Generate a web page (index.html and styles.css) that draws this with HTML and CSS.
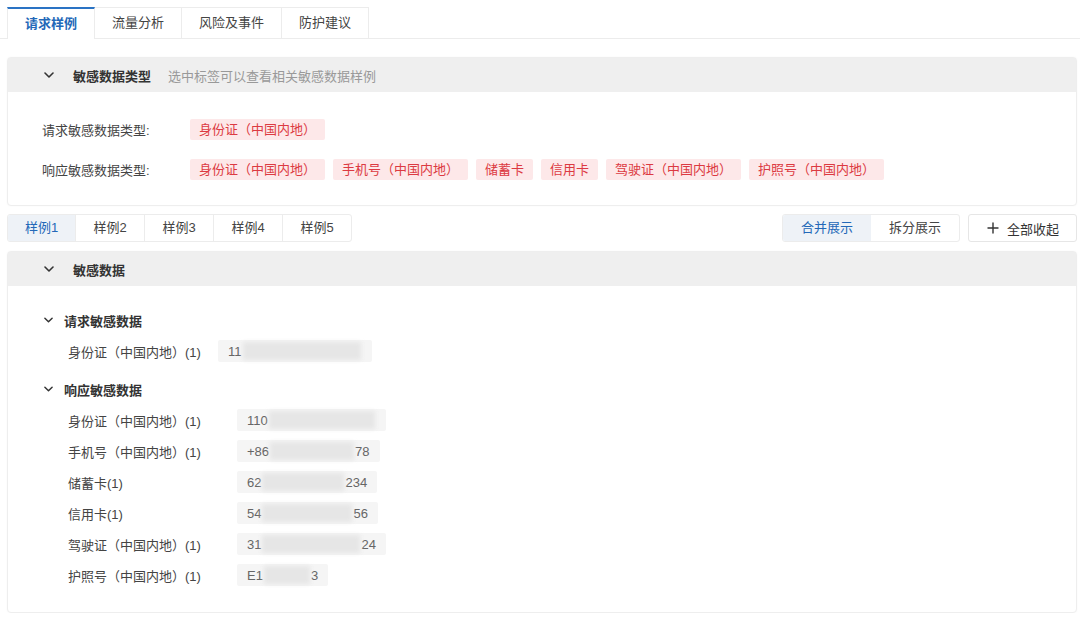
FILE: index.html
```html
<!DOCTYPE html>
<html lang="zh-CN">
<head>
    <meta charset="UTF-8">
    <title>请求样例</title>
    <link rel="stylesheet" href="styles.css">
</head>
<body>

    <div class="tabs">
        <div class="tab active">请求样例</div>
        <div class="tab">流量分析</div>
        <div class="tab">风险及事件</div>
        <div class="tab">防护建议</div>
    </div>

    <div class="panel types-panel">
        <div class="panel-head">
            <svg class="chev" width="10" height="6" viewBox="0 0 10 6"><polyline points="1,1 5,5 9,1"/></svg>
            <span class="panel-title">敏感数据类型</span>
            <span class="panel-hint">选中标签可以查看相关敏感数据样例</span>
        </div>
        <div class="types-body">
            <div class="type-row">
                <span class="type-label">请求敏感数据类型:</span>
                <span class="tag">身份证（中国内地）</span>
            </div>
            <div class="type-row">
                <span class="type-label">响应敏感数据类型:</span>
                <span class="tag">身份证（中国内地）</span>
                <span class="tag">手机号（中国内地）</span>
                <span class="tag">储蓄卡</span>
                <span class="tag">信用卡</span>
                <span class="tag">驾驶证（中国内地）</span>
                <span class="tag">护照号（中国内地）</span>
            </div>
        </div>
    </div>

    <div class="toolbar">
        <div class="samples">
            <div class="sample active">样例1</div>
            <div class="sample">样例2</div>
            <div class="sample">样例3</div>
            <div class="sample">样例4</div>
            <div class="sample">样例5</div>
        </div>
        <div class="actions">
            <div class="segment">
                <div class="seg active">合并展示</div>
                <div class="seg">拆分展示</div>
            </div>
            <div class="btn">
                <svg width="12" height="12" viewBox="0 0 12 12"><path d="M6 1v10M1 6h10"/></svg>
                全部收起
            </div>
        </div>
    </div>

    <div class="panel data-panel">
        <div class="panel-head">
            <svg class="chev" width="10" height="6" viewBox="0 0 10 6"><polyline points="1,1 5,5 9,1"/></svg>
            <span class="panel-title">敏感数据</span>
        </div>
        <div class="data-body">
            <div class="group">
                <div class="group-title">
                    <svg class="chev small" width="9" height="6" viewBox="0 0 10 6"><polyline points="1,1 5,5 9,1"/></svg>
                    请求敏感数据
                </div>
                <div class="rows req">
                    <span class="row-label">身份证（中国内地）(1)</span>
                    <span class="val"><span>11</span><i class="mask" style="width:118px"></i></span>
                </div>
            </div>
            <div class="group">
                <div class="group-title">
                    <svg class="chev small" width="9" height="6" viewBox="0 0 10 6"><polyline points="1,1 5,5 9,1"/></svg>
                    响应敏感数据
                </div>
                <div class="rows resp">
                    <span class="row-label">身份证（中国内地）(1)</span>
                    <span class="val"><span>110</span><i class="mask" style="width:106px"></i></span>

                    <span class="row-label">手机号（中国内地）(1)</span>
                    <span class="val"><span>+86</span><i class="mask" style="width:84px"></i><span>78</span></span>

                    <span class="row-label">储蓄卡(1)</span>
                    <span class="val"><span>62</span><i class="mask" style="width:82px"></i><span>234</span></span>

                    <span class="row-label">信用卡(1)</span>
                    <span class="val"><span>54</span><i class="mask" style="width:90px"></i><span>56</span></span>

                    <span class="row-label">驾驶证（中国内地）(1)</span>
                    <span class="val"><span>31</span><i class="mask" style="width:98px"></i><span>24</span></span>

                    <span class="row-label">护照号（中国内地）(1)</span>
                    <span class="val"><span>E1</span><i class="mask" style="width:46px"></i><span>3</span></span>
                </div>
            </div>
        </div>
    </div>

</body>
</html>
```

FILE: styles.css
```css
body {
    font-family: "Liberation Sans", "Noto Sans CJK SC", sans-serif;
    font-size: 13px;
    color: #333;
    background-color: #ffffff;
    margin: 0;
    padding: 7px 3px 0 7px;
}

svg {
    fill: none;
    stroke: #333;
    stroke-width: 1.6;
    stroke-linecap: round;
    stroke-linejoin: round;
}

/* top tabs */
.tabs {
    display: flex;
    border-bottom: 1px solid #ececec;
    margin-right: -3px;
    margin-left: -7px;
    padding-left: 7px;
}

.tab {
    height: 30px;
    line-height: 30px;
    padding: 0 17px;
    border: 1px solid #ececec;
    border-bottom: none;
    margin-right: -1px;
    margin-bottom: -1px;
    color: #444;
    background-color: #fff;
}

.tab.active {
    color: #2368b8;
    font-weight: bold;
    border-top: 2px solid #2a73c4;
    line-height: 29px;
    position: relative;
}

.tab.active::after {
    content: "";
    position: absolute;
    left: 0;
    right: 0;
    bottom: -1px;
    height: 1px;
    background-color: #fff;
}

/* panels */
.panel {
    border: 1px solid #eeeeee;
    border-radius: 4px;
    background-color: #fff;
    box-shadow: 0 0 2px rgba(0, 0, 0, 0.04);
}

.types-panel {
    margin-top: 18px;
}

.panel-head {
    display: flex;
    align-items: center;
    height: 34px;
    background-color: #efefef;
    padding-left: 36px;
}

.chev {
    margin-right: 19px;
}

.panel-title {
    font-weight: bold;
    color: #333;
}

.panel-hint {
    color: #999;
    margin-left: 17px;
}

.types-body {
    padding: 27px 0 25px 34px;
    display: flex;
    flex-direction: column;
    gap: 19px;
}

.type-row {
    display: flex;
    align-items: center;
    gap: 8px;
}

.type-label {
    width: 140px;
    color: #444;
}

.tag {
    height: 21px;
    line-height: 21px;
    padding: 0 9px;
    background-color: #fde8e9;
    color: #dc3a42;
    border-radius: 2px;
}

/* toolbar */
.toolbar {
    display: flex;
    justify-content: space-between;
    align-items: center;
    margin: 8px 0 9px;
}

.samples {
    display: flex;
    border: 1px solid #ececec;
    border-radius: 3px;
    overflow: hidden;
}

.sample {
    width: 68px;
    height: 26px;
    line-height: 26px;
    text-align: center;
    color: #444;
    border-left: 1px solid #ececec;
}

.sample:first-child {
    border-left: none;
    width: 67px;
}

.sample.active {
    background-color: #eef2f7;
    color: #2368b8;
}

.actions {
    display: flex;
    gap: 8px;
}

.segment {
    display: flex;
    border: 1px solid #ececec;
    border-radius: 3px;
    overflow: hidden;
}

.seg {
    width: 88px;
    height: 26px;
    line-height: 26px;
    text-align: center;
    color: #444;
}

.seg.active {
    background-color: #eef2f7;
    color: #2368b8;
}

.btn {
    display: flex;
    align-items: center;
    gap: 8px;
    width: 109px;
    box-sizing: border-box;
    padding-left: 18px;
    height: 28px;
    border: 1px solid #e6e6e6;
    border-radius: 3px;
    color: #333;
}

.btn svg {
    stroke-width: 1.4;
}

/* sensitive data */
.data-body {
    padding: 23px 0 26px 36px;
}

.group + .group {
    margin-top: 16px;
}

.group-title {
    display: flex;
    align-items: center;
    height: 22px;
    font-weight: bold;
    color: #333;
}

.group-title .chev {
    margin-right: 11px;
}

.rows {
    display: grid;
    row-gap: 9px;
    align-items: center;
    margin-top: 9px;
    padding-left: 24px;
}

.rows.req {
    grid-template-columns: 150px auto;
}

.rows.resp {
    grid-template-columns: 169px auto;
}

.row-label {
    color: #444;
}

.val {
    justify-self: start;
    display: flex;
    align-items: center;
    height: 22px;
    padding: 0 10px;
    background-color: #f5f5f5;
    color: #666;
    border-radius: 2px;
}

.mask {
    display: inline-block;
    height: 18px;
    background-color: #e6e6e6;
    filter: blur(2px);
    margin: 0 1px;
}
```
